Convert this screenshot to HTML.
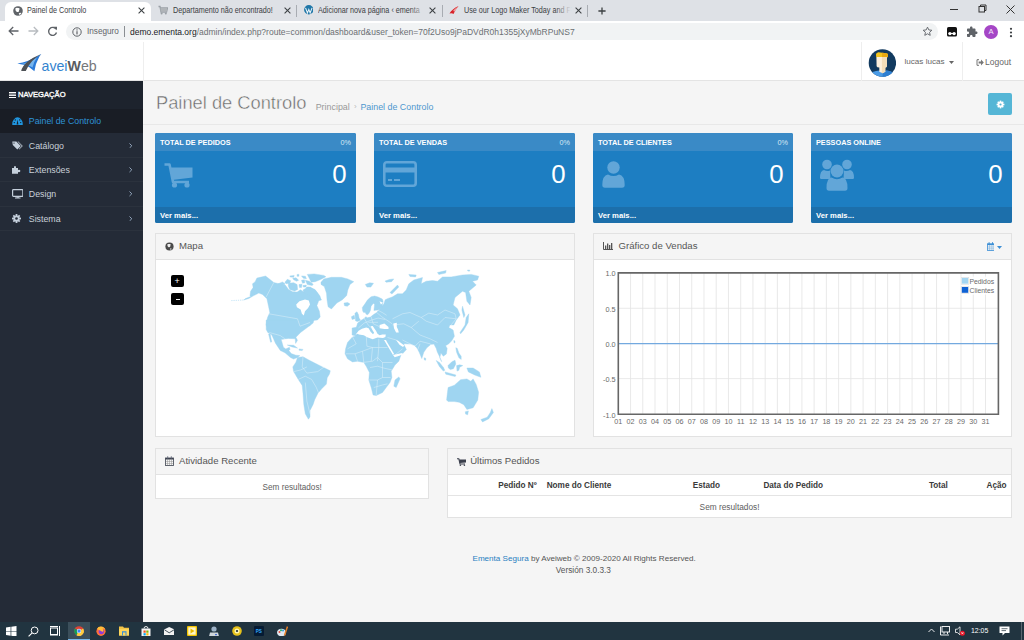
<!DOCTYPE html>
<html><head><meta charset="utf-8">
<style>
*{box-sizing:border-box;margin:0;padding:0}
html,body{width:1024px;height:640px;overflow:hidden;background:#f5f5f5;font-family:"Liberation Sans",sans-serif;position:relative}
.a{position:absolute}
.t{position:absolute;white-space:nowrap;line-height:1}
/* chrome */
#tabbar{left:0;top:0;width:1024px;height:21px;background:#dee1e6}
#toolbar{left:0;top:21px;width:1024px;height:21.5px;background:#fff;border-bottom:1px solid #dadce0}
.tab{top:0;height:20px}
.tabtxt{font-size:8.8px;color:#3c4043;top:5.6px;transform:scaleX(0.82);transform-origin:0 0}
.tabx{font-size:10px;color:#3c4043;top:4px}
.sep{top:4.5px;width:1px;height:12px;background:#a8acb2}
#omni{left:66px;top:23px;width:872px;height:17px;border-radius:9px;background:#f1f3f4}
/* header */
#header{left:0;top:42px;width:1024px;height:39px;background:#fff;border-bottom:1px solid #e4e4e4}
/* sidebar */
#side{left:0;top:81px;width:143px;height:541px;background:#242b37}
#navhead{left:0;top:81px;width:143px;height:28px;background:#1d232d}
.mi{left:0;width:143px;height:24.3px;border-bottom:1px solid #2b323d}
.mit{font-size:8.8px;color:#c9d1d9;left:28.8px}
/* content */
.box{width:201px;height:90px;border-radius:2px;overflow:hidden;top:133px;background:#1d7ec2}
.box .hd{left:0;top:0;width:100%;height:18px;background:#3a8ac6}
.box .ft{left:0;top:74px;width:100%;height:16px;background:#1c6fab}
.box .ht{font-size:7.3px;font-weight:bold;color:#fff;left:5px;top:5.5px}
.box .pc{font-size:7.2px;color:#d8e8f4;right:5px;top:6px}
.box .num{font-size:25.8px;color:#fff;right:9.5px;top:28.6px}
.box .vm{font-size:7.7px;font-weight:bold;color:#fff;left:5px;top:78.9px}
.panel{background:#fff;border:1px solid #e2e2e2}
.phd{left:0;top:0;width:100%;height:26px;background:#f5f5f5;border-bottom:1px solid #e2e2e2}
.ptxt{font-size:9.6px;color:#555}
.th{font-size:8.2px;font-weight:bold;color:#3a3a3a;top:482.2px}
</style></head><body>
<!-- browser chrome -->
<div id="tabbar" class="a"></div>
<div class="a" style="left:5px;top:2px;width:146px;height:19px;background:#fff;border-radius:6px 6px 0 0"></div>
<div id="toolbar" class="a"></div>
<div id="omni" class="a"></div>


<!-- tabs -->
<svg class="a" style="left:12.5px;top:5.5px" width="10" height="10" viewBox="0 0 9 9"><circle cx="4.5" cy="4.5" r="4.3" fill="#5f6368"/><path d="M2.2 2.1 Q3.3 1.3 4.5 1.9 Q5.8 1.7 6 2.7 Q5.3 3.6 5.4 4.7 Q4.6 5.8 3.5 5.3 Q2.4 4.7 2.2 3.6Z" fill="#fff"/><path d="M5.2 6.5 Q6.4 5.8 7.6 6.2 Q7 7.6 5.8 8Z" fill="#fff"/></svg>
<div class="t tabtxt" id="tt1" style="left:27px">Painel de Controlo</div>
<svg class="a" style="left:137.5px;top:6.5px" width="7" height="7" viewBox="0 0 7 7"><path d="M0.6 0.6 L6.4 6.4 M6.4 0.6 L0.6 6.4" stroke="#3c4043" stroke-width="1.05"/></svg>
<svg class="a" style="left:158px;top:5px" width="10" height="10" viewBox="0 0 10 10"><path d="M0.5 1.5 H2 L3 7 H8.5 L9.5 3 H2.5" fill="none" stroke="#9aa0a6" stroke-width="1.3"/><rect x="2.6" y="3" width="6.4" height="3.6" fill="#b0b4b8"/><circle cx="3.6" cy="8.6" r="1" fill="#9aa0a6"/><circle cx="7.8" cy="8.6" r="1" fill="#9aa0a6"/></svg>
<div class="t tabtxt" id="tt2" style="left:173px">Departamento não encontrado!</div>
<svg class="a" style="left:283.5px;top:6.5px" width="7" height="7" viewBox="0 0 7 7"><path d="M0.6 0.6 L6.4 6.4 M6.4 0.6 L0.6 6.4" stroke="#3c4043" stroke-width="1.05"/></svg>
<div class="a sep" style="left:296px"></div>
<svg class="a" style="left:303.5px;top:5.2px" width="9.6" height="9.6" viewBox="0 0 10 10"><circle cx="5" cy="5" r="4.9" fill="#1f77a8"/><path d="M1.6 3 L3.6 8.3 L5 4.6 L6.4 8.3 L8.4 3" fill="none" stroke="#e8f2f8" stroke-width="1.1"/></svg>
<div class="t tabtxt" id="tt3" style="left:318px;color:#3c4043">Adicionar nova página ‹ ementa</div>
<div class="a" style="left:410px;top:3px;width:16px;height:14px;background:linear-gradient(90deg,rgba(222,225,230,0),#dee1e6)"></div>
<svg class="a" style="left:429px;top:6.5px" width="7" height="7" viewBox="0 0 7 7"><path d="M0.6 0.6 L6.4 6.4 M6.4 0.6 L0.6 6.4" stroke="#3c4043" stroke-width="1.05"/></svg>
<div class="a sep" style="left:442px"></div>
<svg class="a" style="left:449px;top:5px" width="10" height="10" viewBox="0 0 10 10"><path d="M0.5 8.5 Q3 4 9.5 1 Q6 5 4.5 9 Q3 7.6 0.5 8.5Z" fill="#d8232a"/><path d="M4 6 Q6 3.5 9.5 1 Q7 4.5 6 6.5Z" fill="#f0a0a0"/></svg>
<div class="t tabtxt" id="tt4" style="left:464px">Use our Logo Maker Today and F</div>
<div class="a" style="left:555px;top:3px;width:16px;height:14px;background:linear-gradient(90deg,rgba(222,225,230,0),#dee1e6)"></div>
<svg class="a" style="left:574.5px;top:6.5px" width="7" height="7" viewBox="0 0 7 7"><path d="M0.6 0.6 L6.4 6.4 M6.4 0.6 L0.6 6.4" stroke="#3c4043" stroke-width="1.05"/></svg>
<div class="a sep" style="left:587px"></div>
<svg class="a" style="left:597.5px;top:6.5px" width="8" height="8" viewBox="0 0 8 8"><path d="M4 0.4 V7.6 M0.4 4 H7.6" stroke="#3c4043" stroke-width="1.3"/></svg>
<!-- window controls -->
<div class="a" style="left:950px;top:9px;width:8px;height:1px;background:#333"></div>
<svg class="a" style="left:978px;top:4px" width="9" height="9" viewBox="0 0 9 9"><rect x="1" y="2.5" width="5.5" height="5.5" fill="none" stroke="#333" stroke-width="1"/><path d="M2.5 2.5 V1 H8 V6.5 H6.5" fill="none" stroke="#333" stroke-width="1"/></svg>
<svg class="a" style="left:1006px;top:4.5px" width="9" height="9" viewBox="0 0 9 9"><path d="M0.5 0.5 L8.5 8.5 M8.5 0.5 L0.5 8.5" stroke="#333" stroke-width="1"/></svg>
<!-- toolbar -->
<svg class="a" style="left:8px;top:26px" width="11" height="10" viewBox="0 0 11 10"><path d="M10.5 5 H1.5 M5.2 1 L1.2 5 L5.2 9" fill="none" stroke="#5f6368" stroke-width="1.3"/></svg>
<svg class="a" style="left:28px;top:26px" width="11" height="10" viewBox="0 0 11 10"><path d="M0.5 5 H9.5 M5.8 1 L9.8 5 L5.8 9" fill="none" stroke="#b8bcc0" stroke-width="1.3"/></svg>
<svg class="a" style="left:47px;top:25.5px" width="11" height="11" viewBox="0 0 11 11"><path d="M9 3.2 A4 4 0 1 0 9.5 6.5" fill="none" stroke="#5f6368" stroke-width="1.4"/><path d="M6.5 0.8 L10 0.8 L10 4.3Z" fill="#5f6368"/></svg>
<svg class="a" style="left:72px;top:26.5px" width="10" height="10" viewBox="0 0 10 10"><circle cx="5" cy="5" r="4.2" fill="none" stroke="#5f6368" stroke-width="1"/><rect x="4.4" y="4.2" width="1.2" height="3.2" fill="#5f6368"/><rect x="4.4" y="2.4" width="1.2" height="1.1" fill="#5f6368"/></svg>
<div class="t" id="ins" style="left:87px;top:28.4px;font-size:8.2px;color:#5f6368">Inseguro</div>
<div class="a" style="left:124px;top:26px;width:1px;height:11px;background:#8a8e92"></div>
<div class="t" id="url" style="left:130px;top:27.9px;font-size:8.5px;color:#6b6f73"><span style="color:#202124">demo.ementa.org</span>/admin/index.php?route=common/dashboard&amp;user_token=70f2Uso9jPaDVdR0h1355jXyMbRPuNS7</div>
<svg class="a" style="left:922px;top:26px" width="11" height="11" viewBox="0 0 24 24"><path d="M12 2.5 L14.9 8.6 L21.5 9.3 L16.5 13.8 L17.9 20.4 L12 17 L6.1 20.4 L7.5 13.8 L2.5 9.3 L9.1 8.6Z" fill="none" stroke="#5f6368" stroke-width="2"/></svg>
<svg class="a" style="left:947.3px;top:27px" width="10" height="9.5" viewBox="0 0 10 9.5"><rect x="0" y="0" width="10" height="9.5" rx="1.6" fill="#111"/><circle cx="2.9" cy="6.6" r="1.7" fill="#fff"/><circle cx="7.1" cy="6.6" r="1.7" fill="#fff"/><rect x="2.9" y="6" width="4.2" height="1" fill="#fff"/></svg>
<svg class="a" style="left:966px;top:25.5px" width="12" height="12" viewBox="0 0 24 24"><path d="M20.5 11H19V7c0-1.1-.9-2-2-2h-4V3.5C13 2.12 11.88 1 10.5 1S8 2.12 8 3.5V5H4c-1.1 0-1.99.9-1.99 2v3.8H3.5c1.49 0 2.7 1.21 2.7 2.7s-1.21 2.7-2.7 2.7H2V20c0 1.1.9 2 2 2h3.8v-1.5c0-1.49 1.21-2.7 2.7-2.7 1.49 0 2.7 1.21 2.7 2.7V22H17c1.1 0 2-.9 2-2v-4h1.5c1.38 0 2.5-1.12 2.5-2.5S21.88 11 20.5 11z" fill="#5f6368"/></svg>
<div class="a" style="left:984.3px;top:25px;width:13.8px;height:13.8px;border-radius:50%;background:#a546c6"></div>
<div class="t" style="left:988.6px;top:28.4px;font-size:7.6px;color:#f4e8fa">A</div>
<svg class="a" style="left:1009px;top:26.5px" width="4" height="11" viewBox="0 0 4 11"><circle cx="2" cy="1.8" r="1.1" fill="#3c4043"/><circle cx="2" cy="5.5" r="1.1" fill="#3c4043"/><circle cx="2" cy="9.2" r="1.1" fill="#3c4043"/></svg>

<div id="header" class="a"></div>
<div class="a" style="left:143px;top:42px;width:1px;height:39px;background:#eee"></div>
<div class="a" style="left:861px;top:42px;width:1px;height:39px;background:#eee"></div>
<div class="a" style="left:962px;top:42px;width:1px;height:39px;background:#eee"></div>


<!-- logo -->
<svg class="a" style="left:15px;top:52px" width="30" height="22" viewBox="15 52 30 22"><path d="M17.3 63.4 Q27.6 62.6 41.25 54.05 L39.3 56.8 Q35.4 63.6 34.4 71.2 Q29.5 66.5 24.6 65.1 Q20.7 64.1 17.3 63.4Z" fill="#2b7ad8"/><path d="M21.5 64 Q28 63 37 57.5 Q33.5 62 32.5 67.5 Q28.5 64.8 21.5 64Z" fill="#8ec8f6" opacity="0.75"/><path d="M21.2 71 Q23.2 61.5 41.25 54.05 Q31 59.5 25.8 71Z" fill="#4d5156"/></svg>
<div class="t" id="logo" style="left:41.5px;top:59.2px;font-size:14.2px;color:#3484cf">avei<b style="color:#595b5f">W</b><span style="color:#75777b">eb</span></div>
<!-- user -->
<svg class="a" style="left:867.5px;top:48.5px" width="28" height="28" viewBox="0 0 28 28"><defs><clipPath id="cc"><circle cx="14.4" cy="14" r="13.7"/></clipPath></defs><circle cx="14.4" cy="14" r="13.7" fill="#123a5f"/><g clip-path="url(#cc)"><path d="M3 28 L4.5 23 Q8 21.6 11.3 21.4 L14.6 24.2 L18.2 21.4 Q21.5 21.6 24.5 23.3 L26 28Z" fill="#4a9be6"/><path d="M14.6 24.2 L18.2 21.4 Q21.5 21.6 24.5 23.3 L26 28 H14.6Z" fill="#2f7fd0"/><path d="M8.4 8 H18.9 V17.2 Q18.5 18.4 17.3 18.6 V22.8 L14.6 24.2 L11.3 22.8 V18.6 Q9 18.4 8.6 17.2Z" fill="#fdf0dc"/><path d="M13.9 8 H18.9 V17.2 Q18.5 18.4 17.3 18.6 V22.8 L14.6 24.2 L13.9 23.8Z" fill="#f3ddb8"/><path d="M8.2 8.6 L8 5.5 Q8.5 3.4 9.5 3.8 L10.3 3.3 Q14 3.6 19.3 4.6 Q20.4 6 20 8.2 L18.9 8 H8.4Z" fill="#f6c51d"/><path d="M14 3.8 Q17 4 19.3 4.6 Q20.4 6 20 8.2 L18.9 8 H14Z" fill="#e8a912"/></g></svg>
<div class="t" id="uname" style="left:904.5px;top:57.6px;font-size:8.1px;color:#666">lucas lucas</div>
<svg class="a" style="left:948.5px;top:60.5px" width="5" height="3" viewBox="0 0 5 3"><path d="M0 0 H5 L2.5 3Z" fill="#666"/></svg>
<svg class="a" style="left:976px;top:58.5px" width="8" height="7" viewBox="0 0 8 7"><path d="M3 0.7 H1 V6.3 H3" fill="none" stroke="#777" stroke-width="1"/><path d="M2.6 2.4 H5 V0.6 L7.8 3.5 L5 6.4 V4.6 H2.6Z" fill="#777"/></svg>
<div class="t" id="logout" style="left:985px;top:57.6px;font-size:8.5px;color:#666">Logout</div>

<div id="side" class="a"></div>
<div id="navhead" class="a"></div>
<div class="a mi" style="top:109px;height:24px;background:#191d25;border-bottom:none"></div>
<div class="a mi" style="top:133px;height:25px"></div>
<div class="a mi" style="top:158px;height:24px"></div>
<div class="a mi" style="top:182px;height:25px"></div>
<div class="a mi" style="top:207px;height:24px"></div>


<!-- sidebar content -->
<svg class="a" style="left:9px;top:91.5px" width="7" height="6.5" viewBox="0 0 7 6.5"><rect y="0" width="7" height="1.4" fill="#fff"/><rect y="2.5" width="7" height="1.4" fill="#fff"/><rect y="5" width="7" height="1.4" fill="#fff"/></svg>
<div class="t" id="s_nav" style="left:18px;top:91.2px;font-size:7.6px;font-weight:normal;-webkit-text-stroke:0.35px #fff;color:#fff">NAVEGAÇÃO</div>
<div class="t mit" id="s_1" style="top:117.1px;color:#2e93d6">Painel de Controlo</div>
<div class="t mit" id="s_2" style="top:141.8px">Catálogo</div>
<div class="t mit" id="s_3" style="top:166px">Extensões</div>
<div class="t mit" id="s_4" style="top:190.3px">Design</div>
<div class="t mit" id="s_5" style="top:214.5px">Sistema</div>


<svg class="a" style="left:11.5px;top:116.8px" width="11" height="8.5" viewBox="0 0 11 8.5"><path d="M0.3 8.3 Q0 4.5 1.8 2.4 Q3.5 0.3 5.5 0.3 Q7.5 0.3 9.2 2.4 Q11 4.5 10.7 8.3Z" fill="#2096e0"/><circle cx="2.3" cy="5.6" r="0.7" fill="#1a1e26"/><circle cx="3.3" cy="2.9" r="0.7" fill="#1a1e26"/><circle cx="7.7" cy="2.9" r="0.7" fill="#1a1e26"/><circle cx="8.7" cy="5.6" r="0.7" fill="#1a1e26"/><path d="M4.6 7.4 L5.6 2.6 L6.4 7.4Z" fill="#1a1e26"/></svg>
<svg class="a" style="left:11.5px;top:140.5px" width="11" height="9.5" viewBox="0 0 11 9.5"><path d="M0.3 0.5 H4.3 L8.8 5 L5.3 8.5 L0.8 4Z" fill="#c5d0dc"/><circle cx="2" cy="2.1" r="0.7" fill="#242b37"/><path d="M5.5 0.5 H6.3 L10.8 5 L7.3 8.5 L6.9 8.1 L9.8 5Z" fill="#c5d0dc"/></svg>
<svg class="a" style="left:11.8px;top:164.8px" width="10" height="9" viewBox="0 0 10 9"><path d="M0 3 H2 Q1.6 1.2 3 1 Q4.4 1.2 4 3 H6 V5 Q7.8 4.6 8 6 Q7.8 7.4 6 7 V8.8 H0Z" fill="#c5d0dc"/><path d="M6 5 Q8.2 4.4 8.4 6 Q8.2 7.6 6 7" fill="#c5d0dc"/></svg>
<svg class="a" style="left:11.5px;top:189.3px" width="11.5" height="9.5" viewBox="0 0 11.5 9.5"><rect x="0.6" y="0.6" width="10.3" height="6.8" rx="0.8" fill="none" stroke="#c5d0dc" stroke-width="1.2"/><rect x="4.5" y="7.4" width="2.5" height="1.3" fill="#c5d0dc"/><rect x="3" y="8.5" width="5.5" height="1" fill="#c5d0dc"/></svg>
<svg class="a" style="left:11.6px;top:213.6px" width="9" height="9" viewBox="0 0 9 9"><g fill="#c5d0dc"><circle cx="4.5" cy="4.5" r="3.1"/><rect x="3.6" y="0" width="1.8" height="9"/><rect x="0" y="3.6" width="9" height="1.8"/><rect x="3.6" y="0" width="1.8" height="9" transform="rotate(45 4.5 4.5)"/><rect x="3.6" y="0" width="1.8" height="9" transform="rotate(-45 4.5 4.5)"/></g><circle cx="4.5" cy="4.5" r="1.3" fill="#242b37"/></svg>
<svg class="a" style="left:128.8px;top:142.8px" width="3.5" height="5.5" viewBox="0 0 3.5 5.5"><path d="M0.5 0.5 L2.8 2.75 L0.5 5" fill="none" stroke="#9fb3cc" stroke-width="0.9"/></svg>
<svg class="a" style="left:128.8px;top:167.1px" width="3.5" height="5.5" viewBox="0 0 3.5 5.5"><path d="M0.5 0.5 L2.8 2.75 L0.5 5" fill="none" stroke="#9fb3cc" stroke-width="0.9"/></svg>
<svg class="a" style="left:128.8px;top:191.4px" width="3.5" height="5.5" viewBox="0 0 3.5 5.5"><path d="M0.5 0.5 L2.8 2.75 L0.5 5" fill="none" stroke="#9fb3cc" stroke-width="0.9"/></svg>
<svg class="a" style="left:128.8px;top:215.7px" width="3.5" height="5.5" viewBox="0 0 3.5 5.5"><path d="M0.5 0.5 L2.8 2.75 L0.5 5" fill="none" stroke="#9fb3cc" stroke-width="0.9"/></svg>

<!-- page header -->
<div class="t" id="title" style="left:156px;top:94.2px;font-size:18.3px;color:#666;-webkit-text-stroke:0.45px #f5f5f5">Painel de Controlo</div>
<div class="a" style="left:143px;top:124px;width:881px;height:1px;background:#e8e8e8"></div>
<div class="a" style="left:988px;top:93px;width:24px;height:22px;background:#55b6d6;border-radius:2px"></div>


<div class="t" id="bc1" style="left:315.7px;top:102.7px;font-size:8.9px;color:#999">Principal</div>
<div class="t" style="left:354px;top:102.7px;font-size:8px;color:#bbb">›</div>
<div class="t" id="bc2" style="left:360.4px;top:102.7px;font-size:8.9px;color:#4d97cf">Painel de Controlo</div>

<svg class="a" style="left:995.5px;top:99.5px" width="9" height="9" viewBox="0 0 9 9"><g fill="#fff"><circle cx="4.5" cy="4.5" r="2.9"/><rect x="3.7" y="0.6" width="1.6" height="7.8"/><rect x="0.6" y="3.7" width="7.8" height="1.6"/><rect x="3.7" y="0.6" width="1.6" height="7.8" transform="rotate(45 4.5 4.5)"/><rect x="3.7" y="0.6" width="1.6" height="7.8" transform="rotate(-45 4.5 4.5)"/></g><circle cx="4.5" cy="4.5" r="1.1" fill="#55b6d6"/></svg>
<!-- stat boxes -->
<div class="a box" style="left:155px"><div class="a hd"></div><div class="a ft"></div><svg class="a" style="left:9px;top:30px" width="29" height="25" viewBox="0 0 29 25"><path d="M0.5 1.5 H5.5 L9 19 H25" fill="none" stroke="#62a6d8" stroke-width="2.6" stroke-linejoin="round"/><path d="M5.6 4.5 H28.5 V14.5 L8.2 17 Z" fill="#62a6d8"/><circle cx="10.5" cy="22" r="2.6" fill="#62a6d8"/><circle cx="23" cy="22" r="2.6" fill="#62a6d8"/></svg><div class="t ht" id="bh0">TOTAL DE PEDIDOS</div><div class="t pc" id="bp0">0%</div><div class="t num" id="bn0">0</div><div class="t vm" id="bv0">Ver mais...</div></div>
<div class="a box" style="left:374px"><div class="a hd"></div><div class="a ft"></div><svg class="a" style="left:9px;top:28px" width="34" height="26" viewBox="0 0 34 26"><rect x="1.3" y="1.3" width="31.4" height="23.4" rx="2.5" fill="none" stroke="#62a6d8" stroke-width="2.6"/><rect x="1" y="6.5" width="32" height="5" fill="#62a6d8"/><rect x="5" y="18" width="4" height="2" fill="#62a6d8"/><rect x="11" y="18" width="6" height="2" fill="#62a6d8"/></svg><div class="t ht" id="bh1">TOTAL DE VENDAS</div><div class="t pc" id="bp1">0%</div><div class="t num" id="bn1">0</div><div class="t vm" id="bv1">Ver mais...</div></div>
<div class="a box" style="left:593px;width:200px"><div class="a hd"></div><div class="a ft"></div><svg class="a" style="left:9px;top:27.5px" width="23" height="27" viewBox="0 0 23 27"><circle cx="11.5" cy="6.5" r="6.2" fill="#62a6d8"/><path d="M0.3 24 Q0.3 14.5 6 13.5 Q11.5 16.5 17 13.5 Q22.7 14.5 22.7 24 Q22.7 26.8 20 26.8 H3 Q0.3 26.8 0.3 24Z" fill="#62a6d8"/></svg><div class="t ht" id="bh2">TOTAL DE CLIENTES</div><div class="t pc" id="bp2">0%</div><div class="t num" id="bn2">0</div><div class="t vm" id="bv2">Ver mais...</div></div>
<div class="a box" style="left:811px"><div class="a hd"></div><div class="a ft"></div><svg class="a" style="left:9px;top:25.5px" width="34" height="32" viewBox="0 0 34 32"><circle cx="7" cy="5.5" r="4.8" fill="#62a6d8"/><circle cx="27" cy="5.5" r="4.8" fill="#62a6d8"/><path d="M0 19 Q0 11.5 4 11 Q7 12.8 10 11.5 L10.5 20 H1.5 Q0 20 0 19Z" fill="#62a6d8"/><path d="M34 19 Q34 11.5 30 11 Q27 12.8 24 11.5 L23.5 20 H32.5 Q34 20 34 19Z" fill="#62a6d8"/><circle cx="17" cy="12" r="6.5" fill="#62a6d8"/><path d="M6.5 29 Q6.5 19 11.5 18.5 Q17 22 22.5 18.5 Q27.5 19 27.5 29 Q27.5 31.8 25 31.8 H9 Q6.5 31.8 6.5 29Z" fill="#62a6d8"/></svg><div class="t ht" id="bh3">PESSOAS ONLINE</div><div class="t pc" id="bp3"></div><div class="t num" id="bn3">0</div><div class="t vm" id="bv3">Ver mais...</div></div>

<!-- panels -->
<div class="a panel" style="left:155px;top:233px;width:420px;height:204px"><div class="a phd"></div></div>
<div class="a panel" style="left:593px;top:233px;width:419px;height:204px"><div class="a phd"></div></div>
<div class="a panel" style="left:155px;top:448px;width:274px;height:51px"><div class="a phd"></div></div>
<div class="a panel" style="left:447px;top:448px;width:565px;height:70px"><div class="a phd"></div></div>
<svg class="a" style="left:164.5px;top:241.5px" width="9" height="9" viewBox="0 0 9 9"><circle cx="4.5" cy="4.5" r="4.1" fill="#4a4a4a"/><path d="M2.4 2.3 Q3.4 1.6 4.4 2.1 Q5.6 1.9 5.8 2.8 Q5.2 3.6 5.3 4.6 Q4.6 5.6 3.6 5.2 Q2.6 4.6 2.4 3.6Z" fill="#f0f0f0"/><circle cx="5.8" cy="7" r="0.7" fill="#e8e8e8"/></svg>
<div class="t ptxt" id="p_mapa" style="left:179px;top:241px">Mapa</div>
<svg class="a" style="left:602.5px;top:241.5px" width="10" height="8" viewBox="0 0 10 8"><path d="M0.5 0 V7.5 H10" fill="none" stroke="#555" stroke-width="1"/><rect x="2" y="3.5" width="1.3" height="3.5" fill="#555"/><rect x="4" y="1.5" width="1.3" height="5.5" fill="#555"/><rect x="6" y="3" width="1.3" height="4" fill="#555"/><rect x="8" y="1" width="1.3" height="6" fill="#555"/></svg>
<div class="t ptxt" id="p_graf" style="left:618.5px;top:241px">Gráfico de Vendas</div>
<svg class="a" style="left:986.5px;top:242px" width="7.6" height="9" viewBox="0 0 7.6 9"><rect x="0.4" y="1.8" width="6.8" height="6.8" fill="none" stroke="#3d8fd6" stroke-width="0.8"/><rect x="0.4" y="1.8" width="6.8" height="1.3" fill="#3d8fd6"/><rect x="1.6" y="0.2" width="1" height="2" fill="#3d8fd6"/><rect x="5" y="0.2" width="1" height="2" fill="#3d8fd6"/><path d="M0.4 5 H7.2 M0.4 6.8 H7.2 M2.6 3 V8.6 M4.9 3 V8.6" stroke="#3d8fd6" stroke-width="0.45" opacity="0.8"/></svg><svg class="a" style="left:997.2px;top:245.8px" width="5" height="3" viewBox="0 0 5 3"><path d="M0 0 H5 L2.5 3Z" fill="#3d8fd6"/></svg>
<svg class="a" style="left:165px;top:456px" width="9" height="10" viewBox="0 0 9 10"><rect x="0.5" y="2" width="8" height="7.5" fill="none" stroke="#505560" stroke-width="0.9"/><rect x="0.5" y="2" width="8" height="1.5" fill="#3d4250"/><rect x="2.2" y="0.3" width="1" height="2.2" fill="#6a7080"/><rect x="5.8" y="0.3" width="1" height="2.2" fill="#6a7080"/><path d="M0.5 5.5 H8.5 M0.5 7.5 H8.5 M2.5 3.5 V9.5 M4.5 3.5 V9.5 M6.5 3.5 V9.5" stroke="#666" stroke-width="0.45" opacity="0.75"/></svg>
<div class="t ptxt" id="p_ativ" style="left:179px;top:455.8px">Atividade Recente</div>
<div class="t" id="p_sem1" style="left:262.6px;top:483.8px;font-size:8.2px;color:#606060">Sem resultados!</div>
<svg class="a" style="left:457px;top:457.5px" width="9" height="8" viewBox="0 0 9 8"><path d="M0 0.7 H1.8 L3 6 H8" fill="none" stroke="#3a3f4c" stroke-width="1.1"/><path d="M2 1.6 H9 V4.4 L2.9 5.1Z" fill="#3a3f4c"/><circle cx="3.4" cy="7.2" r="0.8" fill="#3a3f4c"/><circle cx="7.4" cy="7.2" r="0.8" fill="#3a3f4c"/></svg>
<div class="t ptxt" id="p_ult" style="left:470.2px;top:455.8px">Últimos Pedidos</div>
<div class="a" style="left:448px;top:495px;width:563px;height:1px;background:#e4e4e4"></div>
<div class="t th" id="th1" style="left:498.2px">Pedido Nº</div>
<div class="t th" id="th2" style="left:546.7px">Nome do Cliente</div>
<div class="t th" id="th3" style="left:692.7px">Estado</div>
<div class="t th" id="th4" style="left:763.4px">Data do Pedido</div>
<div class="t th" id="th5" style="left:928.9px">Total</div>
<div class="t th" id="th6" style="left:986.5px">Ação</div>
<div class="t" id="p_sem2" style="left:699.6px;top:502.8px;font-size:8.3px;color:#606060">Sem resultados!</div>
<!-- map --><svg class="a" style="left:0;top:0" width="1024" height="640" viewBox="0 0 1024 640"><g fill="#9fd5f1" stroke="#9fd5f1" stroke-width="0.4" stroke-linejoin="round"><path d="M250.0,295.6 L250.6,291.2 L253.1,287.5 L252.5,283.8 L255.0,281.9 L256.9,278.1 L265.6,276.0 L273.8,282.5 L280.0,284.0 L284.9,284.6 L288.6,289.5 L292.6,291.8 L297.1,292.1 L300.5,289.8 L303.4,291.8 L308.5,292.0 L311.6,294.2 L316.6,297.2 L318.8,300.0 L318.1,302.5 L316.9,305.6 L319.4,311.2 L320.2,316.9 L317.5,320.0 L312.5,320.6 L311.0,323.8 L310.0,325.6 L302.5,327.5 L267.5,327.5 L266.0,325.0 L267.5,317.5 L269.8,312.5 L268.5,306.2 L266.9,298.8 L262.5,294.4 L258.8,293.1 L253.8,295.6 L248.8,298.5 L243.8,300.0 L245.0,298.8 L250.6,296.5 Z"/><path d="M288.3,283.2 L293.7,282.7 L297.1,284.6 L297.6,289.5 L294.6,291.0 L289.8,289.5 L288.3,286.1 Z"/><path d="M284.9,282.2 L287.3,279.3 L290.7,280.7 L289.8,283.2 L285.9,283.7 Z"/><path d="M289.8,275.9 L294.2,275.4 L293.7,277.3 L290.3,277.1 Z"/><path d="M292.7,278.3 L296.1,277.8 L298.6,280.3 L296.6,281.2 L293.7,279.8 Z"/><path d="M297.1,274.4 L299.0,274.4 L298.8,276.3 L297.1,276.3 Z"/><path d="M301.5,275.9 L305.4,276.3 L306.4,278.8 L303.4,278.3 Z"/><path d="M307.3,274.4 L314.2,273.9 L323.9,275.4 L325.9,276.8 L320.0,279.8 L315.2,281.7 L311.2,282.2 L309.3,278.3 Z"/><path d="M301.5,280.3 L304.4,279.8 L304.9,282.7 L302.5,283.2 Z"/><path d="M305.4,280.3 L309.3,281.2 L313.2,284.2 L312.2,285.6 L307.3,284.6 Z"/><path d="M299.0,284.6 L302.0,284.2 L301.5,287.6 L299.5,287.6 Z"/><path d="M302.9,285.6 L306.4,285.1 L305.9,287.1 L303.4,287.1 Z"/><path d="M306.4,287.1 L310.3,287.1 L314.2,289.5 L317.1,292.5 L319.1,296.4 L321.5,300.0 L317.1,300.0 L314.2,296.4 L310.3,292.5 L307.3,291.0 Z"/><path d="M278.1,283.8 L282.5,281.9 L285.0,283.8 L281.2,285.6 Z"/><path d="M303.0,290.0 L308.0,287.0 L315.0,289.5 L320.0,296.0 L321.0,300.0 L317.0,301.0 L310.0,296.0 L304.0,293.0 Z"/><path d="M266.2,320.0 L266.2,329.4 L267.8,332.5 L271.7,334.8 L275.6,343.4 L280.3,350.5 L285.0,352.8 L290.5,357.5 L293.6,359.1 L297.5,357.5 L299.8,355.6 L295.9,355.2 L291.2,353.6 L288.9,350.5 L290.0,349.4 L289.4,347.3 L285.8,348.9 L283.4,347.3 L281.9,341.9 L281.1,339.5 L288.1,338.4 L295.2,338.8 L295.6,343.4 L297.5,340.3 L295.9,337.2 L300.6,332.5 L306.9,327.8 L313.1,323.1 L313.9,320.0 Z"/><path d="M268.6,334.1 L270.2,334.1 L271.7,341.9 L270.6,342.2 Z"/><path d="M287.3,345.0 L293.6,345.3 L297.5,348.1 L292.0,346.9 Z"/><path d="M299.1,348.9 L303.0,349.4 L302.2,350.6 L299.1,350.3 Z"/><path d="M297.5,357.5 L303.0,356.7 L308.4,359.8 L316.2,363.8 L322.5,366.9 L330.3,370.8 L329.5,373.9 L327.2,377.8 L326.4,384.1 L321.7,388.8 L317.8,393.4 L314.7,399.7 L313.1,404.4 L310.0,410.6 L310.0,416.9 L308.4,419.2 L305.3,413.8 L303.8,404.4 L303.0,393.4 L302.2,385.6 L298.3,379.4 L293.6,371.6 L292.8,366.9 L295.9,362.2 Z"/><path d="M321.0,282.2 L323.8,278.9 L331.4,277.3 L341.3,277.3 L347.8,278.9 L353.8,281.7 L350.0,284.4 L347.8,289.9 L346.7,295.4 L342.4,299.7 L336.9,303.0 L331.4,309.0 L328.1,306.8 L327.0,299.7 L326.5,293.2 L324.3,286.6 L321.0,284.4 Z"/><path d="M344.0,303.0 L347.8,302.5 L350.0,304.1 L347.3,306.3 L344.5,305.7 Z"/><path d="M365.3,284.4 L369.7,282.8 L373.5,283.3 L370.8,287.1 L367.0,287.1 Z"/><path d="M385.0,281.1 L389.4,279.5 L393.8,278.9 L391.6,281.7 L386.1,282.2 Z"/><path d="M352.1,328.0 L356.3,327.3 L357.7,323.1 L361.3,320.2 L364.1,318.5 L365.8,316.7 L367.2,317.8 L370.4,317.1 L373.9,314.3 L376.7,312.5 L378.1,310.7 L383.8,304.1 L385.2,299.8 L388.0,298.4 L392.2,297.0 L397.5,293.8 L402.5,293.8 L406.2,290.0 L408.8,283.8 L413.8,280.0 L422.5,277.5 L421.2,283.8 L426.2,281.2 L432.5,280.6 L437.5,281.2 L442.5,276.9 L451.2,276.9 L462.5,275.0 L471.2,274.4 L478.8,276.2 L477.5,280.0 L472.5,281.2 L476.2,285.0 L468.8,291.2 L471.2,297.5 L470.0,305.0 L466.9,301.2 L465.6,292.5 L462.5,291.2 L455.0,297.5 L453.1,305.0 L457.5,308.8 L460.0,315.0 L456.2,320.0 L453.8,325.0 L450.0,325.0 L448.8,327.5 L453.1,330.0 L454.4,336.2 L451.9,340.6 L448.8,343.8 L445.6,345.7 L447.2,348.4 L446.4,353.9 L443.3,356.2 L440.9,353.1 L439.8,357.8 L441.7,361.7 L439.4,356.2 L437.4,352.3 L436.2,348.4 L433.9,344.1 L430.8,344.5 L426.9,347.7 L423.8,352.3 L421.8,358.6 L419.1,352.0 L416.7,347.7 L414.4,345.5 L410.5,344.1 L405.0,343.8 L403.6,344.1 L406.4,349.6 L402.3,354.0 L395.0,357.0 L390.0,352.0 L386.0,340.0 L383.0,340.5 L372.0,341.0 L360.0,337.0 L356.0,336.0 L352.1,335.0 Z"/><path d="M362.7,311.1 L362.3,307.6 L364.8,304.1 L367.6,299.8 L371.1,296.7 L374.6,296.0 L378.1,297.0 L382.3,299.1 L383.1,301.2 L382.0,307.6 L378.1,310.0 L373.9,310.4 L374.3,306.9 L374.6,304.1 L373.2,303.4 L371.1,306.2 L370.4,310.4 L369.0,313.2 L367.6,314.8 L366.2,314.3 L365.1,312.2 L363.7,312.6 Z"/><path d="M408.8,274.4 L416.2,275.0 L415.6,276.9 L410.0,276.5 Z"/><path d="M437.5,272.5 L446.2,270.6 L445.6,273.1 L438.8,274.4 Z"/><path d="M467.5,270.0 L470.0,270.2 L469.4,271.2 L467.8,270.9 Z"/><path d="M354.9,313.2 L357.0,311.8 L358.4,314.6 L359.1,318.1 L360.5,320.2 L357.7,321.6 L355.6,320.9 L355.3,318.1 Z"/><path d="M351.4,316.7 L354.2,315.3 L354.9,318.8 L352.1,319.5 Z"/><path d="M390.0,292.5 L397.5,285.0 L398.8,286.9 L391.9,294.0 Z"/><path d="M460.0,332.5 L465.0,325.0 L466.2,317.5 L468.8,313.8 L468.1,322.5 L463.8,330.0 L460.6,333.8 Z"/><path d="M462.5,306.2 L465.0,315.0 L463.8,317.5 L461.9,310.0 Z"/><path d="M345.6,348.8 L347.5,342.5 L352.5,336.9 L358.8,335.0 L366.2,334.4 L370.0,336.9 L376.2,338.8 L383.8,338.8 L386.2,341.2 L389.4,347.5 L392.5,353.8 L397.5,356.2 L401.2,354.4 L398.8,361.2 L395.0,365.0 L391.2,371.2 L391.9,377.5 L390.0,382.5 L386.2,387.5 L382.5,392.5 L376.2,395.6 L373.1,395.0 L371.2,387.5 L368.8,380.0 L369.4,372.5 L366.2,366.2 L363.8,362.5 L357.5,361.2 L352.5,361.9 L347.5,358.8 L345.0,353.8 Z"/><path d="M395.0,380.0 L398.8,376.9 L400.0,378.8 L396.2,387.5 L393.8,386.2 Z"/><path d="M445.0,371.9 L455.9,375.0 L455.2,376.6 L445.8,374.2 Z"/><path d="M466.9,368.0 L473.1,368.0 L479.4,371.9 L480.9,377.3 L474.7,375.0 L468.4,371.9 Z"/><path d="M447.3,393.8 L448.1,387.5 L454.4,385.2 L460.6,379.7 L466.9,378.9 L470.8,381.2 L473.1,378.9 L476.2,384.4 L478.6,392.2 L477.8,400.0 L473.1,407.8 L466.9,409.4 L463.8,404.7 L459.1,402.3 L454.4,401.6 L448.1,401.6 L446.6,400.0 Z"/><path d="M465.3,411.7 L468.4,410.9 L467.7,414.8 L465.6,414.1 Z"/><path d="M480.9,419.5 L487.2,417.2 L490.3,412.5 L491.9,408.6 L493.4,412.5 L488.8,418.8 L482.5,421.9 Z"/><path d="M436.2,360.5 L439.4,362.5 L443.3,367.2 L444.8,370.3 L443.3,371.1 L439.4,366.4 Z"/><path d="M448.0,365.6 L451.9,361.7 L455.0,360.2 L455.8,364.1 L453.4,368.8 L450.3,369.5 L448.4,368.0 Z"/><path d="M456.6,365.6 L459.7,364.8 L462.8,365.6 L459.7,367.2 L458.9,370.3 L457.0,371.1 Z"/><path d="M455.8,347.7 L457.3,348.4 L458.9,353.1 L461.2,356.2 L461.2,359.4 L458.9,357.8 L456.6,352.3 Z"/><path d="M453.8,340.6 L455.0,341.0 L454.8,343.0 L454.1,342.8 Z"/><path d="M424.1,357.8 L425.7,358.2 L425.7,360.2 L424.4,360.0 Z"/></g><g fill="#fff"><path d="M296.2,304.4 L299.4,301.2 L305.0,299.4 L308.8,300.6 L310.0,304.4 L308.1,308.1 L305.0,311.2 L303.8,315.6 L301.9,313.8 L300.6,309.4 L296.9,307.2 Z"/><path d="M379.6,324.9 L384.4,323.5 L388.5,326.9 L388.5,329.0 L384.4,329.0 L379.6,328.3 Z"/><path d="M393.3,323.5 L396.8,322.8 L396.8,326.9 L398.1,329.7 L398.8,332.4 L396.1,332.4 L394.0,328.3 Z"/><path d="M379.5,301.2 L383.0,302.7 L380.9,304.4 Z"/><path d="M396.1,340.0 L398.1,340.7 L404.3,345.5 L403.0,346.9 L399.5,344.8 Z"/><path d="M358.6,330.7 L362.0,328.7 L366.2,327.6 L368.6,328.3 L370.6,331.8 L373.0,334.2 L374.1,332.8 L372.7,330.4 L370.6,326.3 L372.7,325.9 L376.1,331.1 L377.5,333.8 L379.6,335.2 L382.3,334.5 L385.8,334.5 L385.4,336.9 L383.0,337.9 L377.5,337.6 L372.7,339.3 L367.2,337.3 L363.8,335.2 L358.9,334.5 L357.6,333.8 L355.5,334.8 Z"/><path d="M384.0,340.0 L385.8,340.0 L394.0,353.8 L393.0,355.1 Z"/><path d="M393.0,355.1 L402.3,353.1 L403.0,354.5 L394.7,357.2 Z"/></g><g fill="none" stroke="#fff" stroke-width="0.45" opacity="0.75"><path d="M352.5,336.9 L356.2,343.8 L347.5,348.8"/><path d="M345.6,353.8 L355.0,353.8 L362.5,351.2 L372.5,347.5 L378.8,347.5 L387.5,347.5"/><path d="M378.8,338.8 L378.8,347.5 L377.5,361.2"/><path d="M366.2,334.4 L366.9,346.2 L372.5,347.5"/><path d="M362.5,362.5 L372.5,361.2 L377.5,357.5 L382.5,362.5 L392.5,362.5"/><path d="M368.8,380.0 L377.5,380.0 L382.5,377.5 L390.6,377.5"/><path d="M373.8,387.5 L382.5,385.0 L387.5,383.8"/><path d="M370.0,367.5 L377.5,366.2 L383.8,368.1 L392.5,370.0"/><path d="M355.0,353.8 L357.5,361.2"/><path d="M362.5,351.2 L363.8,362.5"/><path d="M372.5,347.5 L371.2,361.2"/><path d="M377.5,380.0 L376.2,395.0"/><path d="M382.5,362.5 L382.5,377.5"/><path d="M387.5,337.5 L396.2,340.0 L400.0,343.8"/><path d="M395.0,355.0 L402.5,348.8"/><path d="M402.5,340.0 L410.0,343.8 L415.0,346.2"/><path d="M415.0,346.2 L420.0,341.2 L430.0,343.8 L436.2,348.8"/><path d="M417.5,350.0 L420.0,343.8"/><path d="M392.5,318.8 L402.5,313.8 L410.0,312.5 L421.2,317.5"/><path d="M421.2,317.5 L428.8,313.1 L437.5,315.0 L445.0,310.0 L455.0,313.8 L456.2,318.8 L445.0,317.5 L437.5,325.0 L426.2,321.2 L421.2,317.5"/><path d="M392.5,325.0 L403.8,323.8 L411.2,327.5 L418.8,321.2"/><path d="M411.2,327.5 L420.0,335.0 L430.0,338.8 L437.5,342.5"/><path d="M456.2,318.8 L450.0,326.2"/><path d="M358.4,328.0 L364.1,323.1 L371.1,320.2 L378.1,318.1 L385.2,319.5"/><path d="M364.1,318.1 L368.3,325.2 L373.2,329.4"/><path d="M371.1,316.7 L373.2,323.8 L379.5,326.6"/><path d="M376.7,312.5 L381.6,316.7 L388.0,320.9 L392.2,323.8"/><path d="M378.1,310.4 L382.3,312.5 L386.6,315.3"/><path d="M368.3,322.3 L378.1,322.3"/><path d="M268.8,313.8 L297.5,318.8 L300.0,326.2 L310.0,322.5"/><path d="M273.8,282.5 L266.2,296.9"/><path d="M242.5,288.8 L242.5,283.8"/><path d="M269.4,332.5 L280.3,335.6 L285.8,339.5"/><path d="M303.0,356.7 L302.2,366.9 L306.9,373.1 L317.8,371.6 L324.1,366.9"/><path d="M298.3,379.4 L305.3,376.2 L311.6,379.4 L316.2,387.2 L319.4,395.0"/><path d="M305.3,382.5 L306.9,401.2 L310.0,413.8"/><path d="M293.6,371.6 L300.6,370.0 L306.9,366.9"/></g><path d="M231.3,300.6 L243.8,300" stroke="#9fd5f1" stroke-width="0.6" stroke-dasharray="1.2 1"/></svg><!-- /map -->
<!-- map zoom buttons -->
<div class="a" style="left:171.3px;top:275px;width:12.7px;height:12px;background:#000;border-radius:2px"></div>
<div class="t" style="left:174.6px;top:277.3px;font-size:9px;color:#fff">+</div>
<div class="a" style="left:171.3px;top:293px;width:12.7px;height:12px;background:#000;border-radius:2px"></div>
<div class="a" style="left:175.5px;top:298.7px;width:4.6px;height:0.9px;background:#eee"></div>
<svg class="a" style="left:0;top:0" width="1024" height="640" viewBox="0 0 1024 640"><g><line x1="630.54" y1="272.9" x2="630.54" y2="414.3" stroke="#e3e3e3" stroke-width="0.8"/><line x1="642.78" y1="272.9" x2="642.78" y2="414.3" stroke="#e3e3e3" stroke-width="0.8"/><line x1="655.02" y1="272.9" x2="655.02" y2="414.3" stroke="#e3e3e3" stroke-width="0.8"/><line x1="667.26" y1="272.9" x2="667.26" y2="414.3" stroke="#e3e3e3" stroke-width="0.8"/><line x1="679.50" y1="272.9" x2="679.50" y2="414.3" stroke="#e3e3e3" stroke-width="0.8"/><line x1="691.74" y1="272.9" x2="691.74" y2="414.3" stroke="#e3e3e3" stroke-width="0.8"/><line x1="703.98" y1="272.9" x2="703.98" y2="414.3" stroke="#e3e3e3" stroke-width="0.8"/><line x1="716.22" y1="272.9" x2="716.22" y2="414.3" stroke="#e3e3e3" stroke-width="0.8"/><line x1="728.46" y1="272.9" x2="728.46" y2="414.3" stroke="#e3e3e3" stroke-width="0.8"/><line x1="740.70" y1="272.9" x2="740.70" y2="414.3" stroke="#e3e3e3" stroke-width="0.8"/><line x1="752.94" y1="272.9" x2="752.94" y2="414.3" stroke="#e3e3e3" stroke-width="0.8"/><line x1="765.18" y1="272.9" x2="765.18" y2="414.3" stroke="#e3e3e3" stroke-width="0.8"/><line x1="777.42" y1="272.9" x2="777.42" y2="414.3" stroke="#e3e3e3" stroke-width="0.8"/><line x1="789.66" y1="272.9" x2="789.66" y2="414.3" stroke="#e3e3e3" stroke-width="0.8"/><line x1="801.90" y1="272.9" x2="801.90" y2="414.3" stroke="#e3e3e3" stroke-width="0.8"/><line x1="814.14" y1="272.9" x2="814.14" y2="414.3" stroke="#e3e3e3" stroke-width="0.8"/><line x1="826.38" y1="272.9" x2="826.38" y2="414.3" stroke="#e3e3e3" stroke-width="0.8"/><line x1="838.62" y1="272.9" x2="838.62" y2="414.3" stroke="#e3e3e3" stroke-width="0.8"/><line x1="850.86" y1="272.9" x2="850.86" y2="414.3" stroke="#e3e3e3" stroke-width="0.8"/><line x1="863.10" y1="272.9" x2="863.10" y2="414.3" stroke="#e3e3e3" stroke-width="0.8"/><line x1="875.34" y1="272.9" x2="875.34" y2="414.3" stroke="#e3e3e3" stroke-width="0.8"/><line x1="887.58" y1="272.9" x2="887.58" y2="414.3" stroke="#e3e3e3" stroke-width="0.8"/><line x1="899.82" y1="272.9" x2="899.82" y2="414.3" stroke="#e3e3e3" stroke-width="0.8"/><line x1="912.06" y1="272.9" x2="912.06" y2="414.3" stroke="#e3e3e3" stroke-width="0.8"/><line x1="924.30" y1="272.9" x2="924.30" y2="414.3" stroke="#e3e3e3" stroke-width="0.8"/><line x1="936.54" y1="272.9" x2="936.54" y2="414.3" stroke="#e3e3e3" stroke-width="0.8"/><line x1="948.78" y1="272.9" x2="948.78" y2="414.3" stroke="#e3e3e3" stroke-width="0.8"/><line x1="961.02" y1="272.9" x2="961.02" y2="414.3" stroke="#e3e3e3" stroke-width="0.8"/><line x1="973.26" y1="272.9" x2="973.26" y2="414.3" stroke="#e3e3e3" stroke-width="0.8"/><line x1="985.50" y1="272.9" x2="985.50" y2="414.3" stroke="#e3e3e3" stroke-width="0.8"/><line x1="618.3" y1="308.25" x2="998.4" y2="308.25" stroke="#e3e3e3" stroke-width="0.8"/><line x1="618.3" y1="378.6" x2="998.4" y2="378.6" stroke="#e3e3e3" stroke-width="0.8"/><line x1="618.3" y1="343.6" x2="998.4" y2="343.6" stroke="#73a9df" stroke-width="1.3"/><path d="M618.3 272.9 H998.4 V414.3 H618.3 Z" fill="none" stroke="#666" stroke-width="1.6"/></g><g font-family="Liberation Sans, sans-serif" font-size="6.8" fill="#6a6a6a"><text x="615.6" y="276.30" text-anchor="end" font-size="7.3">1.0</text><text x="615.6" y="311.65" text-anchor="end" font-size="7.3">0.5</text><text x="615.6" y="347.00" text-anchor="end" font-size="7.3">0.0</text><text x="615.6" y="382.00" text-anchor="end" font-size="7.3">-0.5</text><text x="615.6" y="417.70" text-anchor="end" font-size="7.3">-1.0</text><text x="618.30" y="423.9" text-anchor="middle" font-size="7.2">01</text><text x="630.54" y="423.9" text-anchor="middle" font-size="7.2">02</text><text x="642.78" y="423.9" text-anchor="middle" font-size="7.2">03</text><text x="655.02" y="423.9" text-anchor="middle" font-size="7.2">04</text><text x="667.26" y="423.9" text-anchor="middle" font-size="7.2">05</text><text x="679.50" y="423.9" text-anchor="middle" font-size="7.2">06</text><text x="691.74" y="423.9" text-anchor="middle" font-size="7.2">07</text><text x="703.98" y="423.9" text-anchor="middle" font-size="7.2">08</text><text x="716.22" y="423.9" text-anchor="middle" font-size="7.2">09</text><text x="728.46" y="423.9" text-anchor="middle" font-size="7.2">10</text><text x="740.70" y="423.9" text-anchor="middle" font-size="7.2">11</text><text x="752.94" y="423.9" text-anchor="middle" font-size="7.2">12</text><text x="765.18" y="423.9" text-anchor="middle" font-size="7.2">13</text><text x="777.42" y="423.9" text-anchor="middle" font-size="7.2">14</text><text x="789.66" y="423.9" text-anchor="middle" font-size="7.2">15</text><text x="801.90" y="423.9" text-anchor="middle" font-size="7.2">16</text><text x="814.14" y="423.9" text-anchor="middle" font-size="7.2">17</text><text x="826.38" y="423.9" text-anchor="middle" font-size="7.2">18</text><text x="838.62" y="423.9" text-anchor="middle" font-size="7.2">19</text><text x="850.86" y="423.9" text-anchor="middle" font-size="7.2">20</text><text x="863.10" y="423.9" text-anchor="middle" font-size="7.2">21</text><text x="875.34" y="423.9" text-anchor="middle" font-size="7.2">22</text><text x="887.58" y="423.9" text-anchor="middle" font-size="7.2">23</text><text x="899.82" y="423.9" text-anchor="middle" font-size="7.2">24</text><text x="912.06" y="423.9" text-anchor="middle" font-size="7.2">25</text><text x="924.30" y="423.9" text-anchor="middle" font-size="7.2">26</text><text x="936.54" y="423.9" text-anchor="middle" font-size="7.2">27</text><text x="948.78" y="423.9" text-anchor="middle" font-size="7.2">28</text><text x="961.02" y="423.9" text-anchor="middle" font-size="7.2">29</text><text x="973.26" y="423.9" text-anchor="middle" font-size="7.2">30</text><text x="985.50" y="423.9" text-anchor="middle" font-size="7.2">31</text><rect x="960.6" y="276.6" width="35" height="18" fill="#fff" opacity="0.85"/><rect x="961.2" y="277.3" width="7.6" height="7" fill="#fff" stroke="#ddd" stroke-width="0.6"/><rect x="961.8" y="277.9" width="6.4" height="5.8" fill="#a3d5f1"/><rect x="961.2" y="286.4" width="7.6" height="7" fill="#fff" stroke="#ddd" stroke-width="0.6"/><rect x="961.8" y="287" width="6.4" height="5.8" fill="#0f62d4"/><text x="969.5" y="283.8" font-size="6.8">Pedidos</text><text x="969.5" y="292.9" font-size="6.8">Clientes</text></g></svg>
<!-- footer -->
<div class="t" id="foot1" style="left:472.5px;top:555.4px;font-size:8.08px;color:#555"><span style="color:#2a7fc1">Ementa Segura</span> by Aveiweb © 2009-2020 All Rights Reserved.</div>
<div class="t" id="foot2" style="left:555.8px;top:567.1px;font-size:8.28px;color:#555">Versión 3.0.3.3</div>

<!-- taskbar -->
<div class="a" style="left:0;top:622px;width:1024px;height:18px;background:#213440"></div>
<svg class="a" style="left:6px;top:625.5px" width="10.5" height="10.5" viewBox="0 0 10.5 10.5"><path d="M0 1.5 L4.6 0.8 V4.9 H0Z M5.3 0.7 L10.5 0 V4.9 H5.3Z M0 5.6 H4.6 V9.7 L0 9Z M5.3 5.6 H10.5 V10.5 L5.3 9.8Z" fill="#fff"/></svg>
<svg class="a" style="left:27.5px;top:625.5px" width="11" height="11" viewBox="0 0 11 11"><circle cx="6.6" cy="4.4" r="3.4" fill="none" stroke="#fff" stroke-width="1"/><path d="M4.2 6.8 L0.6 10.4" stroke="#fff" stroke-width="1.1"/></svg>
<svg class="a" style="left:49.5px;top:625.5px" width="11" height="10.5" viewBox="0 0 11 10.5"><rect x="0.5" y="2" width="7" height="6.5" fill="none" stroke="#fff" stroke-width="1"/><path d="M0 0.5 H8 M0 10 H8 M9.5 0 V10.5" stroke="#fff" stroke-width="1"/></svg>
<div class="a" style="left:67.8px;top:621.5px;width:21.8px;height:18.5px;background:#3b4f5b"></div>
<div class="a" style="left:67.8px;top:638.8px;width:21.8px;height:1.2px;background:#79b8ea"></div>
<svg class="a" style="left:74px;top:626px" width="10" height="10" viewBox="0 0 10 10"><circle cx="5" cy="5" r="4.8" fill="#db4437"/><path d="M5 5 L0.84 2.6 A4.8 4.8 0 0 0 2.6 9.16Z" fill="#0f9d58"/><path d="M5 5 L2.6 9.16 A4.8 4.8 0 0 0 9.16 2.6 Z" fill="#ffcd40"/><path d="M5 5 L9.8 5 A4.8 4.8 0 0 1 2.6 9.16Z" fill="#ffcd40"/><circle cx="5" cy="5" r="2.2" fill="#fff"/><circle cx="5" cy="5" r="1.7" fill="#4285f4"/></svg>
<svg class="a" style="left:96px;top:626px" width="10" height="10" viewBox="0 0 10 10"><circle cx="5" cy="5.3" r="4.6" fill="#ff7139"/><circle cx="5.3" cy="5.6" r="2.6" fill="#8f3bd8"/><path d="M1 3 Q2 0.5 5 0.6 Q8.5 1 9.4 4 Q8.5 2 6.5 2.6 Q8 4 7 6" fill="#ffbd3a"/></svg>
<svg class="a" style="left:118.5px;top:626px" width="10.5" height="9.5" viewBox="0 0 10.5 9.5"><path d="M0 0.5 H4 L5 1.8 H10.5 V9.5 H0Z" fill="#f4c446"/><rect x="0" y="3" width="10.5" height="6.5" fill="#fcd55c"/><rect x="3" y="5.2" width="4.5" height="4.3" fill="#3b8fd6"/><rect x="4" y="6.5" width="2.5" height="3" fill="#fcd55c"/></svg>
<svg class="a" style="left:141px;top:625.5px" width="10" height="10.5" viewBox="0 0 10 10.5"><path d="M3 2.5 Q3 0.5 5 0.5 Q7 0.5 7 2.5" fill="none" stroke="#fff" stroke-width="0.9"/><rect x="0.5" y="2.5" width="9" height="8" fill="#f4f4f4"/><rect x="2.5" y="4.5" width="2.2" height="2.2" fill="#f25022"/><rect x="5.3" y="4.5" width="2.2" height="2.2" fill="#7fba00"/><rect x="2.5" y="7.2" width="2.2" height="2.2" fill="#00a4ef"/><rect x="5.3" y="7.2" width="2.2" height="2.2" fill="#ffb900"/></svg>
<svg class="a" style="left:163.5px;top:627px" width="10.5" height="8" viewBox="0 0 10.5 8"><path d="M0 2.5 L5.2 0 L10.5 2.5 V8 H0Z" fill="#f2f2f2"/><path d="M0.5 2.8 L5.2 5.8 L10 2.8" fill="none" stroke="#1d2e3a" stroke-width="0.8"/></svg>
<svg class="a" style="left:186.5px;top:626px" width="10" height="10" viewBox="0 0 10 10"><rect x="0" y="0" width="10" height="10" rx="1" fill="#f4c400"/><rect x="1.3" y="1.3" width="7.4" height="7.4" fill="#fff6c8"/><path d="M3.5 2.5 L7.5 5 L3.5 7.5Z" fill="#e8b800"/></svg>
<svg class="a" style="left:209px;top:625.5px" width="10" height="10.5" viewBox="0 0 10 10.5"><circle cx="5" cy="3" r="2.6" fill="#9db3c8"/><path d="M1 6.5 H9 L10 10.5 H0Z" fill="#cfd6dc"/><rect x="6" y="8" width="2" height="1.2" fill="#4a6fd0"/></svg>
<svg class="a" style="left:231.5px;top:626px" width="10" height="10" viewBox="0 0 10 10"><circle cx="5" cy="5" r="4.8" fill="#e6c21a"/><circle cx="5" cy="5" r="2.5" fill="#fff4b0"/><circle cx="5" cy="5" r="1.1" fill="#1d2e3a"/></svg>
<svg class="a" style="left:254px;top:626px" width="10" height="10" viewBox="0 0 10 10"><rect x="0" y="0" width="10" height="10" rx="1" fill="#061b33"/><text x="1.8" y="7" font-size="4.6" font-family="Liberation Sans" font-weight="bold" fill="#31a8ff">PS</text></svg>
<svg class="a" style="left:276.5px;top:625.5px" width="11" height="10.5" viewBox="0 0 11 10.5"><ellipse cx="4.5" cy="6.5" rx="4.5" ry="3.8" fill="#dfe8f0"/><circle cx="2.5" cy="6" r="1" fill="#e74c3c"/><circle cx="4" cy="4.3" r="1" fill="#27ae60"/><circle cx="6" cy="4.5" r="1" fill="#3498db"/><path d="M7.5 9.5 L10.5 0.5" stroke="#e67e22" stroke-width="1.5"/></svg>
<!-- tray -->
<svg class="a" style="left:927.5px;top:628px" width="7" height="4.5" viewBox="0 0 7 4.5"><path d="M0.5 4 L3.5 1 L6.5 4" fill="none" stroke="#fff" stroke-width="0.9"/></svg>
<svg class="a" style="left:940px;top:626px" width="10" height="9.5" viewBox="0 0 10 9.5"><rect x="2" y="0.5" width="7.5" height="5.5" fill="none" stroke="#fff" stroke-width="0.9"/><path d="M0.5 0.5 V9 M0.5 9 H9 M4 6 V8 M7.5 6 V8" stroke="#fff" stroke-width="0.9"/></svg>
<svg class="a" style="left:954.5px;top:626px" width="10" height="10" viewBox="0 0 10 10"><path d="M0.5 3.2 H2.3 L5 0.8 V8.8 L2.3 6.5 H0.5Z" fill="none" stroke="#fff" stroke-width="0.8"/><circle cx="7.4" cy="7.2" r="2.5" fill="#e81123"/><path d="M6.4 6.2 L8.4 8.2 M8.4 6.2 L6.4 8.2" stroke="#fff" stroke-width="0.7"/></svg>
<div class="t" id="clock" style="left:971px;top:627.6px;font-size:6.9px;color:#fff">12:05</div>
<svg class="a" style="left:998.5px;top:625.5px" width="11" height="10" viewBox="0 0 11 10"><path d="M0.5 0.5 H10.5 V7 H6 L3.5 9.5 V7 H0.5Z" fill="#fff"/><path d="M2.5 2.7 H8.5 M2.5 4.6 H7" stroke="#1d2e3a" stroke-width="0.7"/></svg>
<div class="a" style="left:1021px;top:621.5px;width:1px;height:18.5px;background:#5a6670"></div>
</body></html>
